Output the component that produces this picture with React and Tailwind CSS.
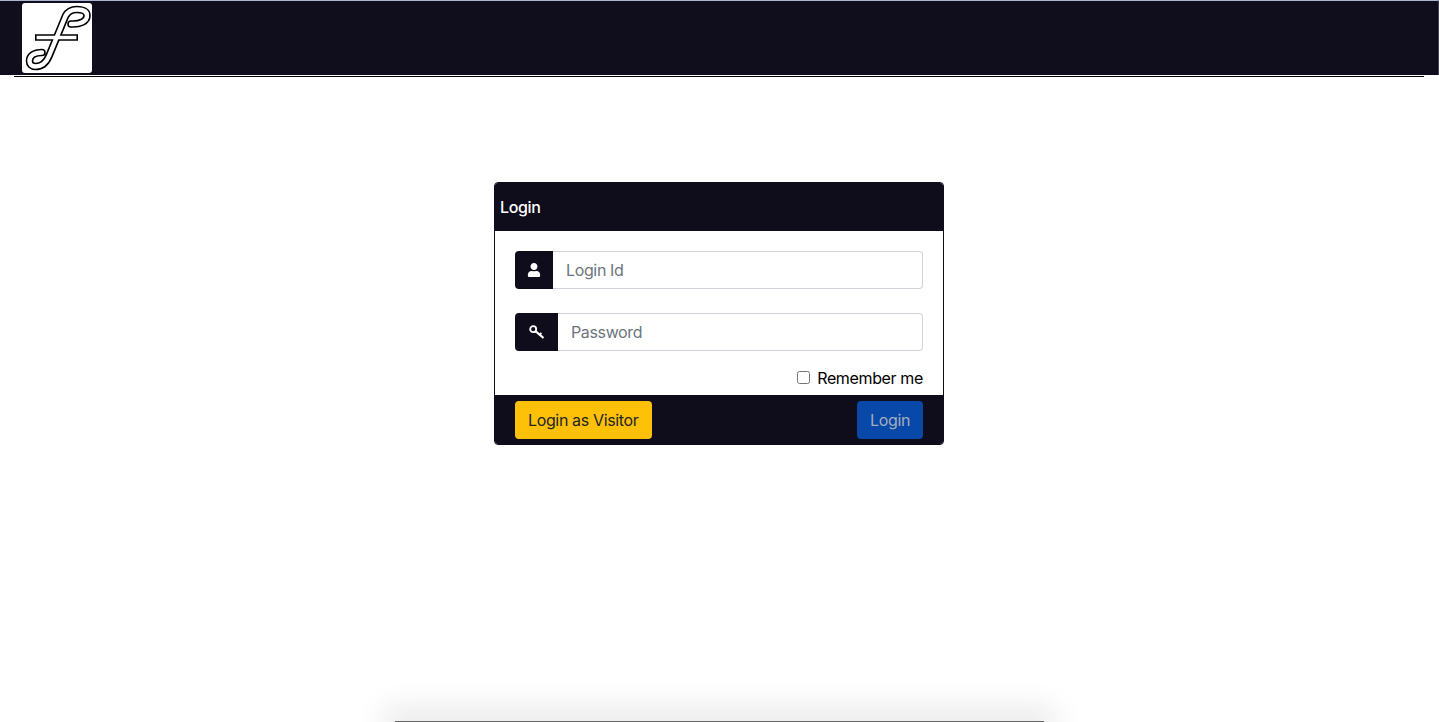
import React from "react";
import { FaUser } from "react-icons/fa";

const F_PATH =
  "M49 21 C58 21.500 65 18.500 65 12.500 C65 8 60 6.500 55 6.500 C49 6.500 45.500 9 43.500 13 L27 53 C24.500 59 20 63.500 13.500 63.500 C9.500 63.500 7.500 61 7.500 58 C7.500 53 12 49.500 20 49.500";

const Logo = () => (
  <div className="h-[70px] w-[70px] rounded-[3px] bg-white">
    <svg width="70" height="70" viewBox="0 0 70 70" fill="none">
      <path d="M13 34.500 H56" stroke="#000" strokeWidth="6.500" />
      <path d={F_PATH} stroke="#000" strokeWidth="7.600" strokeLinecap="round" />
      <path d="M14.600 34.500 H54.400" stroke="#fff" strokeWidth="3.400" />
      <path d={F_PATH} stroke="#fff" strokeWidth="4.400" strokeLinecap="round" />
    </svg>
  </div>
);

const KeyIcon = () => (
  <svg width="16" height="14" viewBox="0 0 16 14" fill="none" stroke="#fff">
    <circle cx="4.200" cy="4.200" r="3" strokeWidth="1.800" />
    <path d="M6.500 6.200 L14.500 13" strokeWidth="2.200" />
    <path d="M10.500 9.800 L12.400 8" strokeWidth="1.800" />
  </svg>
);

const Field = ({ icon, addonWidth, placeholder, type }) => (
  <div className="flex h-[38px]">
    <span
      className={`flex ${addonWidth} shrink-0 items-center justify-center rounded-l-[4px] bg-[#0f0d1c] text-white`}
    >
      {icon}
    </span>
    <input
      type={type}
      placeholder={placeholder}
      className="w-full rounded-r-[4px] border border-l-0 border-[#ced4da] bg-white px-[13px] text-base tracking-[-0.36px] text-[#212529] outline-none placeholder:text-[#6c757d]"
    />
  </div>
);

export default function App() {
  return (
    <div className="flex h-[722px] flex-col overflow-hidden bg-white font-['Inter',sans-serif] text-base text-black">
      <header className="h-[75px] border-t border-r border-t-[#a9b6d0] border-r-[#44434f] bg-[#100e1d] pl-[22px] pt-[2px]">
        <Logo />
      </header>
      <hr className="ml-[14px] mr-[15px] mt-px border-t border-black" />

      <main className="flex flex-1 justify-center pr-px pt-[105px]">
        <div className="h-[263px] w-[450px] overflow-hidden rounded-[4px] border border-[#0f0d1c] tracking-[-0.36px]">
          <div className="flex h-[48px] items-center bg-[#0f0d1c] pl-[5px] text-base font-medium text-white">
            Login
          </div>
          <div className="h-[164px] bg-white px-5 pt-5">
            <Field
              icon={<FaUser size={14} />}
              addonWidth="w-[38px]"
              placeholder="Login Id"
              type="text"
            />
            <div className="mt-6">
              <Field
                icon={<KeyIcon />}
                addonWidth="w-[43px]"
                placeholder="Password"
                type="password"
              />
            </div>
            <div className="mt-[15px] flex items-center justify-end leading-6">
              <input
                type="checkbox"
                className="mb-[2px] mr-[7px] h-[13px] w-[13px]"
                id="remember"
              />
              <label htmlFor="remember">Remember me</label>
            </div>
          </div>
          <div className="flex h-[49px] items-start justify-between bg-[#0f0d1c] px-5 pt-[6px]">
            <button
              type="button"
              className="h-[38px] rounded-[4px] bg-[#ffc107] pl-[13px] pr-[14px] text-[#212529]"
            >
              Login as Visitor
            </button>
            <button
              type="button"
              className="h-[38px] rounded-[4px] bg-[#0848a8] px-[13px] text-[#a5aebd]"
            >
              Login
            </button>
          </div>
        </div>
      </main>

      <div className="mx-auto h-px w-[649px] shrink-0 bg-[#666] shadow-[0_0_30px_12px_rgba(0,0,0,0.1)]" />
    </div>
  );
}
